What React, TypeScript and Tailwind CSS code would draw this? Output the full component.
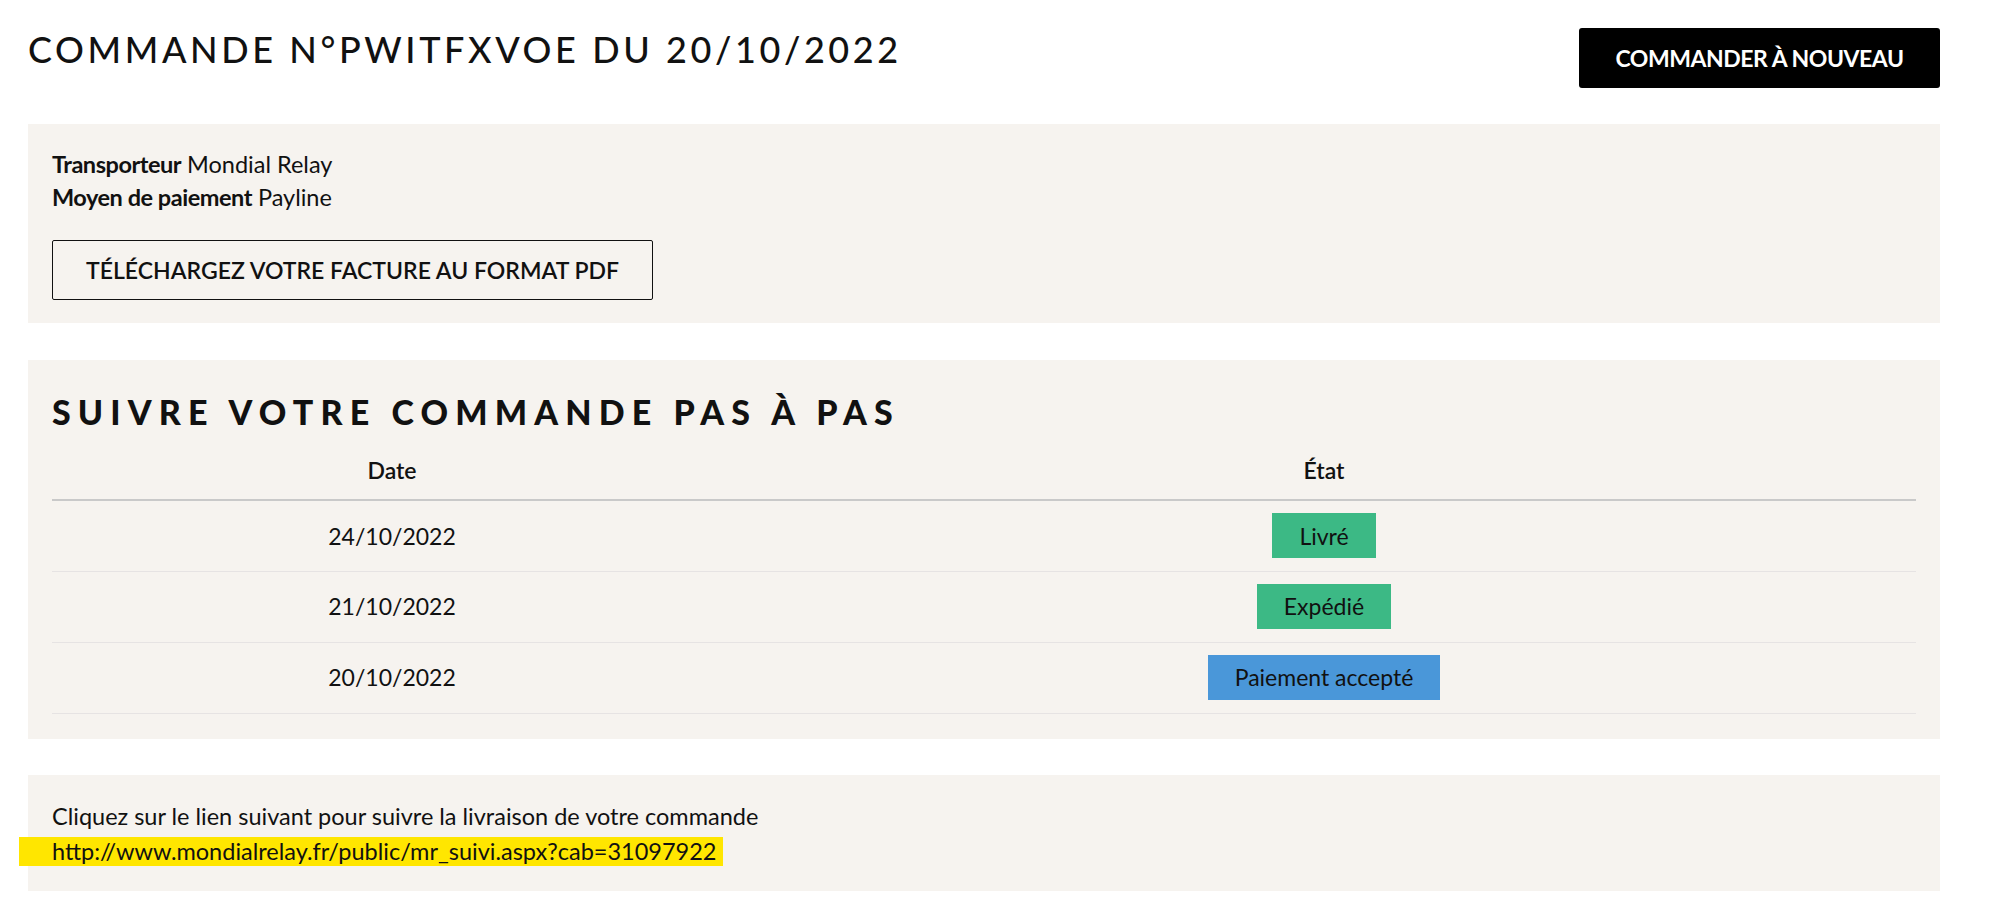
import React from "react";

const rows = [
  { date: "24/10/2022", label: "Livré", color: "bg-[#3cb985]" },
  { date: "21/10/2022", label: "Expédié", color: "bg-[#3cb985]" },
  { date: "20/10/2022", label: "Paiement accepté", color: "bg-[#4a97d9]" },
];

export default function App() {
  return (
    <div className="w-[2000px] min-h-[903px] bg-white pl-[28px] pr-[60px] pt-[28px] text-[#111] [font-family:Lato,'Liberation_Sans',sans-serif]">
      <div className="flex items-start justify-between">
        <h1 className="mt-[-1px] text-[36px] leading-[44px] font-medium tracking-[0.1em] text-[#111]">
          COMMANDE N°PWITFXVOE DU 20/10/2022
        </h1>
        <button className="h-[60px] w-[361px] rounded-[3px] bg-black text-[23px] font-bold tracking-[-0.02em] text-white">
          COMMANDER À NOUVEAU
        </button>
      </div>

      <section className="mt-[36px] bg-[#f6f3ef] px-[24px] pt-[24px] pb-[23px]">
        <p className="text-[23.5px] leading-[33px]">
          <span className="font-bold tracking-[-0.02em]">Transporteur</span> Mondial Relay
        </p>
        <p className="text-[23.5px] leading-[33px]">
          <span className="font-bold tracking-[-0.02em]">Moyen de paiement</span> Payline
        </p>
        <button className="mt-[26px] h-[60px] w-[601px] rounded-[2px] border border-[#111] text-[23px] font-semibold text-[#111]">
          TÉLÉCHARGEZ VOTRE FACTURE AU FORMAT PDF
        </button>
      </section>

      <section className="mt-[37px] bg-[#f6f3ef] px-[24px] pt-[30px] pb-[25px]">
        <h2 className="text-[34px] leading-[44px] font-black tracking-[0.21em] text-[#111]">
          SUIVRE VOTRE COMMANDE PAS À PAS
        </h2>
        <table className="mt-[7px] w-full border-collapse text-[23px]">
          <thead>
            <tr className="border-b-2 border-[#c9c9c9]">
              <th className="w-[680px] h-[59px] font-semibold">Date</th>
              <th className="h-[59px] font-semibold">État</th>
            </tr>
          </thead>
          <tbody>
            {rows.map((r) => (
              <tr key={r.date} className="border-b border-[#e6e3e3]">
                <td className="h-[71px] text-center">{r.date}</td>
                <td className="h-[71px] text-center">
                  <span className={`inline-flex h-[45px] items-center px-[27px] ${r.color}`}>{r.label}</span>
                </td>
              </tr>
            ))}
          </tbody>
        </table>
      </section>

      <section className="mt-[36px] bg-[#f6f3ef] px-[24px] pt-[27px] pb-[25px]">
        <p className="text-[23.5px] leading-[28px]">Cliquez sur le lien suivant pour suivre la livraison de votre commande</p>
        <div className="ml-[-33px] mt-[7px] inline-block bg-[#ffe600] pl-[33px] pr-[6px] text-[23.5px] leading-[29px]">
          http://www.mondialrelay.fr/public/mr_suivi.aspx?cab=31097922
        </div>
      </section>
    </div>
  );
}
